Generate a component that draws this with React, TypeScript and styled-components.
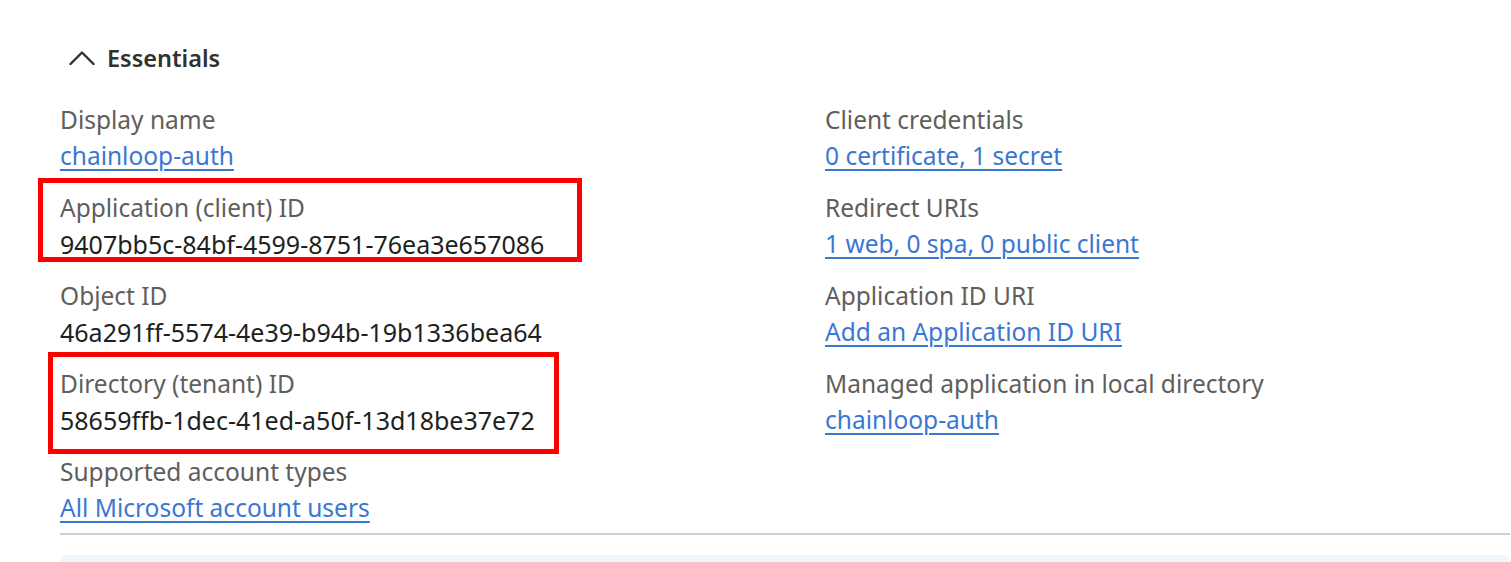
import React from "react";
import styled, { createGlobalStyle } from "styled-components";

const GlobalStyle = createGlobalStyle`
    html, body {
        margin: 0;
        padding: 0;
        background: #ffffff;
    }
    body {
        font-family: "Noto Sans", "Open Sans", sans-serif;
        overflow: hidden;
    }
`;

const Page = styled.div`
    width: 1511px;
    height: 562px;
    padding: 40px 1px 0 60px;
    box-sizing: border-box;
    overflow: hidden;
`;

const Header = styled.button`
    display: flex;
    align-items: center;
    gap: 12px;
    height: 36px;
    padding: 0 0 0 9px;
    border: none;
    background: none;
    font-family: inherit;
    font-size: 23.5px;
    font-weight: 600;
    color: #323130;
    cursor: pointer;
`;

const Grid = styled.div`
    display: grid;
    grid-template-columns: 765px 1fr;
    margin-top: 26px;
`;

const Column = styled.div`
    display: flex;
    flex-direction: column;
    gap: 16px;
`;

const Field = styled.div`
    position: relative;
    display: flex;
    flex-direction: column;
`;

const Label = styled.span`
    font-size: 24.5px;
    line-height: 36px;
    color: #605e5c;
    white-space: nowrap;
`;

const Value = styled.span`
    font-size: 25px;
    line-height: 36px;
    color: #201f1e;
    white-space: nowrap;
`;

const Link = styled.a`
    font-size: 24.5px;
    line-height: 36px;
    color: #3a77d3;
    text-decoration: underline;
    text-underline-offset: 4px;
    text-decoration-thickness: 2px;
    white-space: nowrap;
    align-self: flex-start;
    cursor: pointer;
`;

const Highlight = styled.div<{ $left: number; $top: number; $width: number; $height: number }>`
    position: absolute;
    left: ${(p) => p.$left}px;
    top: ${(p) => p.$top}px;
    width: ${(p) => p.$width}px;
    height: ${(p) => p.$height}px;
    border: 5px solid #ff0000;
    box-sizing: border-box;
    pointer-events: none;
`;

const Divider = styled.hr`
    margin: 7px 0 0 0;
    border: none;
    border-top: 2px solid #d2d0ce;
`;

const InfoBar = styled.div`
    margin-top: 20px;
    height: 40px;
    background: #eff6fc;
    border-radius: 6px 6px 0 0;
`;

type Item = {
    label: string;
    value: string;
    link?: boolean;
    box?: { left: number; top: number; width: number; height: number };
};

const left: Item[] = [
    { label: "Display name", value: "chainloop-auth", link: true },
    {
        label: "Application (client) ID",
        value: "9407bb5c-84bf-4599-8751-76ea3e657086",
        box: { left: -22, top: -12, width: 544, height: 84 },
    },
    { label: "Object ID", value: "46a291ff-5574-4e39-b94b-19b1336bea64" },
    {
        label: "Directory (tenant) ID",
        value: "58659ffb-1dec-41ed-a50f-13d18be37e72",
        box: { left: -12, top: -14, width: 511, height: 102 },
    },
    { label: "Supported account types", value: "All Microsoft account users", link: true },
];

const right: Item[] = [
    { label: "Client credentials", value: "0 certificate, 1 secret", link: true },
    { label: "Redirect URIs", value: "1 web, 0 spa, 0 public client", link: true },
    { label: "Application ID URI", value: "Add an Application ID URI", link: true },
    { label: "Managed application in local directory", value: "chainloop-auth", link: true },
];

const Chevron = () => (
    <svg width="26" height="16" viewBox="0 0 26 16" fill="none">
        <polyline
            points="1.5,14 13,2.5 24.5,14"
            stroke="#323130"
            strokeWidth="2.4"
            strokeLinecap="round"
            strokeLinejoin="round"
        />
    </svg>
);

const renderItem = (item: Item) => (
    <Field key={item.label}>
        <Label>{item.label}</Label>
        {item.link ? <Link>{item.value}</Link> : <Value>{item.value}</Value>}
        {item.box && (
            <Highlight
                $left={item.box.left}
                $top={item.box.top}
                $width={item.box.width}
                $height={item.box.height}
            />
        )}
    </Field>
);

const App: React.FC = () => {
    return (
        <>
            <GlobalStyle />
            <Page>
                <Header>
                    <Chevron />
                    <span>Essentials</span>
                </Header>
                <Grid>
                    <Column>{left.map(renderItem)}</Column>
                    <Column>{right.map(renderItem)}</Column>
                </Grid>
                <Divider />
                <InfoBar />
            </Page>
        </>
    );
};

export default App;
